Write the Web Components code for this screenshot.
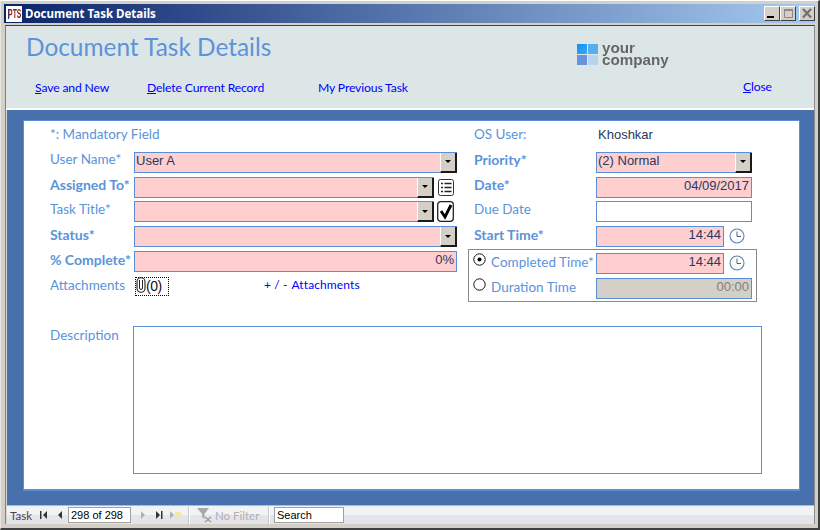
<!DOCTYPE html>
<html><head><meta charset="utf-8"><style>
html,body{margin:0;padding:0;width:820px;height:530px;overflow:hidden;background:#d4d0c8}
</style></head><body>
<app-window>
  <title-bar slot="title">Document Task Details</title-bar>
  <form-header slot="header"></form-header>
  <task-form slot="body"></task-form>
  <nav-bar slot="nav"></nav-bar>
</app-window>
<script>
const LBL='"Lato","Open Sans",sans-serif';
function def(name,html){customElements.define(name,class extends HTMLElement{connectedCallback(){if(this.shadowRoot)return;this.attachShadow({mode:'open'}).innerHTML=typeof html==='function'?html(this):html;}});}
def('app-window',`<style>:host{display:flex;flex-direction:column;box-sizing:border-box;width:820px;height:530px;background:#d4d0c8;padding:3px 3px 4px 3px;border-top:1px solid #fff;border-left:1px solid #e8e6e0;border-right:2px solid #404040;border-bottom:2px solid #404040;font-family:${LBL}}
.in{flex:1;display:flex;flex-direction:column;min-height:0;margin:2px 0 0 1px;border-left:1px solid #808080;border-top:1px solid #404040;border-right:1px solid #8c8c8c}
</style><slot name="title"></slot><div class="in"><slot name="header"></slot><slot name="body"></slot><slot name="nav"></slot></div>`);
def('win-btn',t=>`<style>:host{display:block;box-sizing:border-box;width:16px;height:15px;background:#d4d0c8;border:1px solid;border-color:#fff #404040 #404040 #fff}svg{display:block;width:14px;height:13px}</style><svg viewBox="0 0 14 13">${t.getAttribute('k')==='min'?'<rect x="2" y="9" width="7" height="2" fill="#000"/>':t.getAttribute('k')==='max'?'<path d="M3.5 2.5h8v8h-8z" fill="none" stroke="#8a8a8a"/><rect x="3" y="2" width="9" height="2" fill="#8a8a8a"/>':'<path d="M3 2l8 8.5M11 2l-8 8.5" stroke="#707070" stroke-width="2.2"/>'}</svg>`);
def('title-bar',`<style>:host{display:flex;align-items:center;height:19px;flex:none;padding:0 0 0 2px;background:linear-gradient(90deg,#0a246a,#a6caf0);color:#fff;font:bold 11.5px "Noto Sans","Liberation Sans",sans-serif}
.ico{box-sizing:border-box;width:16px;height:16px;background:#fff;margin-right:3px;display:flex;justify-content:center;overflow:hidden;border-left:2px solid #fff;position:relative}
.ico i{position:absolute;left:0;top:3px;width:1px;height:10px;background:#2a3a8a}
.ico span{display:block;color:#8a1a1a;font:bold 10px/16px "Liberation Sans",sans-serif;transform:scale(.68,1.25);letter-spacing:0}
.t{flex:1}.b{display:flex}.b win-btn:nth-child(3){margin-left:3px}</style><span class="ico"><i></i><span>PTS</span></span><span class="t"><slot></slot></span><span class="b"><win-btn k="min"></win-btn><win-btn k="max"></win-btn><win-btn k="x"></win-btn></span>`);
def('u-link',`<style>:host{display:inline-block;color:#0000ff;font:12.2px ${LBL};letter-spacing:-.15px;white-space:nowrap}</style><slot></slot>`);
def('form-header',`<style>:host{display:block;box-sizing:border-box;height:84px;flex:none;background:#dce6e7;border-bottom:2px solid #fff;color:#00f}
.top{display:flex;height:51px;box-sizing:border-box;padding:5px 0 0 20px}
h1{margin:0;width:551px;flex:none;font:400 24.4px/32px ${LBL};color:#5b93db}
.logo{display:flex;gap:4px;margin-top:11px;color:#666;font:bold 15.2px/12px "Liberation Sans",sans-serif;filter:blur(.3px)}
.logo svg{flex:none;margin-top:2px}
.lk{display:flex;padding-left:29px;height:20px;align-items:center}
u{text-decoration:underline}
</style><div class="top"><h1>Document Task Details</h1><div class="logo"><svg width="21" height="21" viewBox="0 0 21 21"><defs><linearGradient id="a" x1="0" y1="0" x2="1" y2="1"><stop offset="0" stop-color="#0b93f5"/><stop offset="1" stop-color="#3fa8f2"/></linearGradient></defs><rect width="10" height="10" fill="url(#a)"/><rect x="11" width="10" height="10" fill="#55aef0"/><rect y="11" width="10" height="10" fill="#6a93df"/><rect x="11" y="11" width="10" height="10" fill="#b8d4ec"/></svg><span>your<br>company</span></div></div>
<div class="lk"><u-link style="width:112px"><u>S</u>ave and New</u-link><u-link style="width:171px"><u>D</u>elete Current Record</u-link><u-link style="width:425px">My Previous Task</u-link><u-link style="margin-top:-2px"><u>C</u>lose</u-link></div>`);
def('drop-arrow',`<style>:host{display:flex;align-items:center;justify-content:center;box-sizing:border-box;width:17px;flex:none;background:#d4d0c8;border-style:solid;border-width:0 2px 2px 1px;border-color:#fff #1a1a1a #1a1a1a #fff;margin:0 -1px -1px 0}i{width:0;height:0;border:3px solid transparent;border-top:3px solid #000;border-bottom:0}</style><i></i>`);
def('f-input',t=>`<style>:host{display:flex;box-sizing:border-box;height:21px;flex:none;border:1px solid #5a8fd8;background:var(--bg,#ffcfcf);color:var(--fg,#283860);font:13px/15px "Liberation Sans",sans-serif;padding-left:1px}
.v{flex:1;text-align:${t.hasAttribute('right')?'right':'left'};padding-right:${t.hasAttribute('right')?'2px':'0'};white-space:nowrap}</style><span class="v"><slot></slot></span>${t.hasAttribute('combo')?'<drop-arrow></drop-arrow>':''}`);
def('f-label',`<style>:host{display:block;flex:none;color:#5b93db;font:13.5px/19px ${LBL};white-space:nowrap;overflow:hidden;margin-bottom:var(--mb,6px)}:host([b]){font-weight:700;font-size:14px}</style><slot></slot>`);
def('f-row',`<style>:host{display:flex;align-items:center;height:24.8px;flex:none}</style><slot></slot>`);
def('clock-icon',`<style>:host{display:block;width:16px;height:16px;flex:none;margin:0 0 2px 5px}svg{display:block}</style><svg width="16" height="16" viewBox="0 0 16 16"><circle cx="8" cy="8" r="7" fill="none" stroke="#5a80b0" stroke-width="1.1"/><path d="M8 3.5V8.5H12" fill="none" stroke="#50607a"/></svg>`);
def('list-icon',`<style>:host{display:block;width:16px;height:17px;flex:none;margin:0 3px 0 4px}svg{display:block}</style><svg width="16" height="17" viewBox="0 0 16 17"><rect x=".5" y=".5" width="15" height="16" rx="2" fill="#fff" stroke="#333"/><path d="M3 4.5h2M6.5 4.5h7M3 8.5h2M6.5 8.5h7M3 12.5h2M6.5 12.5h7" stroke="#222" stroke-width="1.5"/></svg>`);
def('check-icon',`<style>:host{display:block;width:17px;height:21px;flex:none;margin:0 3px 0 3px}svg{display:block}</style><svg width="17" height="21" viewBox="0 0 17 21"><rect x=".7" y=".7" width="15.6" height="19.6" rx="3" fill="#fff" stroke="#222" stroke-width="1.3"/><path d="M4 10l4 6L14 4" fill="none" stroke="#000" stroke-width="2.8"/></svg>`);
def('radio-dot',t=>`<style>:host{display:block;width:13px;height:13px;flex:none;margin:0 5px 8px 0}svg{display:block}</style><svg width="13" height="13" viewBox="0 0 13 13"><circle cx="6.5" cy="6.5" r="5.7" fill="#fff" stroke="#111"/>${t.hasAttribute('on')?'<circle cx="6.5" cy="6.5" r="2" fill="#000"/>':''}</svg>`);
def('task-form',`<style>:host{flex:1;display:block;min-height:0;box-sizing:border-box;background:#4870ac;padding:10px 14px 0 16px;border-left:1px solid #d8d8d8}
.panel{box-sizing:border-box;height:371px;background:#fff;border:1px solid #5a8fd8;border-bottom-width:2px;padding:0 0 0 26px;display:flex;flex-direction:column}
.cols{display:flex;height:205px;flex:none;box-sizing:border-box;padding-top:3px}
.l{width:407px;margin-right:17px}.r{flex:none}
.l f-label{width:84px}.r f-label{width:122px}
.l f-input{flex:1}.r f-input{width:156px}
f-row.first{height:26px}
.l>f-row:nth-child(n+4),.r>f-row:nth-child(n+4){--mb:4px}
.l>f-row:nth-child(7){--mb:2px}
.group{box-sizing:border-box;margin:0 0 0 -6px;width:289px;height:53px;border:1px solid #8a8a8a;padding:1px 0 0 4px;--mb:2px}
.group f-row{height:25px}.group f-label{width:105px}
.att{font:14px "Liberation Sans",sans-serif;letter-spacing:-.5px;color:#111;box-sizing:border-box;height:19px;width:34px;border:1px dotted #000;display:flex;align-items:center;margin:0 95px 0 1px;flex:none}
.att svg{flex:none;margin:-3px 0 0 0}
.lnk{color:#0000ff;font:12px ${LBL};letter-spacing:.1px;white-space:nowrap;margin-bottom:3px;display:flex}
.lnk b{font-weight:400;width:27.5px;flex:none}
.os{font:13px "Liberation Sans",sans-serif;color:#283860;margin:0 0 6px 2px}
.d{display:flex}.box{box-sizing:border-box;width:629px;height:148px;border:1px solid #5a8fd8;margin-left:-1px}
</style><div class="panel"><div class="cols"><div class="l">
<f-row class="first"><f-label style="width:auto">*: Mandatory Field</f-label></f-row>
<f-row><f-label>User Name*</f-label><f-input combo>User A</f-input></f-row>
<f-row><f-label b style="width:79.5px;margin-right:4.5px">Assigned To*</f-label><f-input combo style="flex:none;width:300px"></f-input><list-icon></list-icon></f-row>
<f-row><f-label>Task Title*</f-label><f-input combo style="flex:none;width:300px"></f-input><check-icon></check-icon></f-row>
<f-row><f-label b>Status*</f-label><f-input combo></f-input></f-row>
<f-row><f-label b>% Complete*</f-label><f-input right>0%</f-input></f-row>
<f-row><f-label>Attachments</f-label><span class="att"><svg width="10" height="16" viewBox="0 0 10 16"><rect x="1" y=".7" width="8" height="14.5" rx="4" fill="none" stroke="#222" stroke-width="1.1"/><path d="M3.5 3v8a1.5 1.5 0 0 0 3 0V3" fill="none" stroke="#222"/></svg>(0)</span><span class="lnk"><b>+ / -</b><span>Attachments</span></span></f-row>
</div><div class="r">
<f-row class="first"><f-label>OS User:</f-label><span class="os">Khoshkar</span></f-row>
<f-row><f-label b>Priority*</f-label><f-input combo>(2) Normal</f-input></f-row>
<f-row><f-label b>Date*</f-label><f-input right>04/09/2017</f-input></f-row>
<f-row><f-label>Due Date</f-label><f-input style="--bg:#fff"></f-input></f-row>
<f-row><f-label b>Start Time*</f-label><f-input right style="width:128px">14:44</f-input><clock-icon></clock-icon></f-row>
<div class="group">
<f-row><radio-dot on></radio-dot><f-label>Completed Time*</f-label><f-input right style="width:128px">14:44</f-input><clock-icon></clock-icon></f-row>
<f-row><radio-dot></radio-dot><f-label>Duration Time</f-label><f-input right style="--bg:#d4d0c8;--fg:#808080">00:00</f-input></f-row>
</div></div></div>
<div class="d"><f-label style="width:84px">Description</f-label><div class="box"></div></div>
</div>`);
def('nav-btn',t=>`<style>:host{display:block;width:var(--w,15px);flex:none}svg{display:block;margin:0 auto}</style><svg width="11" height="10" viewBox="0 0 11 10" fill="${t.hasAttribute('off')?'#b0b0b0':'#333'}">${{first:'<rect x="2" y="1" width="1.5" height="8"/><path d="M9 1v8L5 5z"/>',prev:'<path d="M8 1v8L4 5z"/>',next:'<path d="M4 1v8l4-4z"/>',last:'<path d="M2 1v8l4-4z"/><rect x="7" y="1" width="1.5" height="8"/>',neu:'<path d="M0 1v8l4-4z"/><path d="M5 2h6v6H5z" fill="#f0e8b0"/>'}[t.getAttribute('k')]}</svg>`);
def('nav-bar',`<style>:host{display:flex;align-items:center;box-sizing:border-box;height:19px;flex:none;background:linear-gradient(#f2f3f6 50%,#e4e5ea 50%);border-top:1px solid #b9b9b9;border-left:1px solid #d8d8d8;font:11.5px "Liberation Sans",sans-serif;color:#333;padding-left:3px}
.n{font:11.5px ${LBL};color:#445;width:26px}
.box{box-sizing:border-box;height:16px;background:#fff;border:1px solid #a0a0a0;color:#000;font:11px/14px "Liberation Sans",sans-serif;padding-left:2px;white-space:pre}
.sep{width:2px;height:18px;background:#c8c8c8;border-right:1px solid #fff;flex:none;box-sizing:border-box}
.f{display:flex;align-items:center;color:#b0b0b0;font:11.5px ${LBL};width:71px;gap:2px;flex:none}
</style><span class="n">Task</span><nav-btn k="first" style="--w:15px"></nav-btn><nav-btn k="prev" style="--w:17px"></nav-btn><span class="box" style="width:63px">298 of 298</span><nav-btn k="next" off style="--w:15px;margin-left:4px"></nav-btn><nav-btn k="last" style="--w:19px"></nav-btn><nav-btn k="neu" off style="--w:13px"></nav-btn><span class="sep" style="margin:0 7px 0 6px"></span>
<span class="f"><svg width="16" height="16" viewBox="0 0 16 16"><path d="M0 1h12L7.5 7v5L5 10V7z" fill="#a8a8a8"/><path d="M8 10l6 5M14 10l-6 5" stroke="#999" stroke-width="1.2"/></svg>No Filter</span><span class="sep" style="margin-right:4px"></span><span class="box" style="width:70px">Search</span>`);
</script></body></html>
